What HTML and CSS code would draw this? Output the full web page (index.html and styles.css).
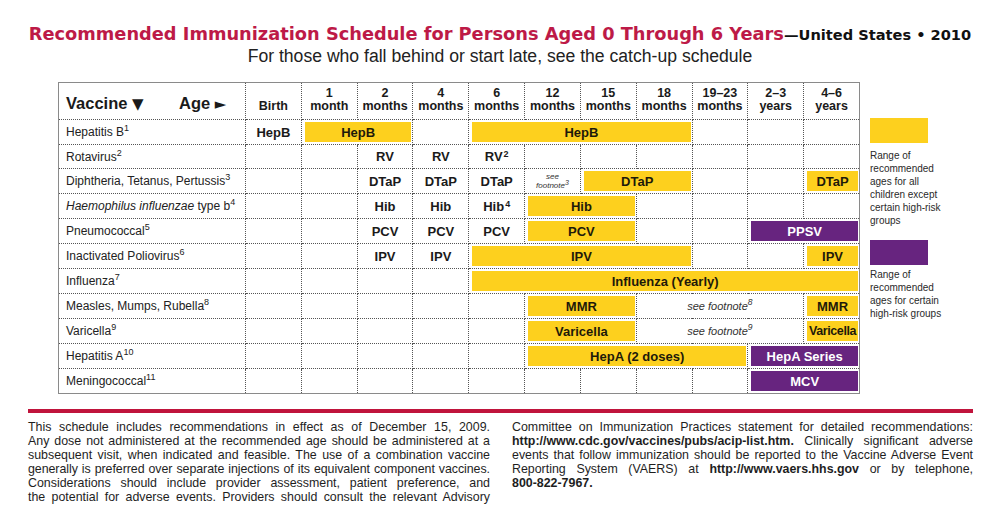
FILE: index.html
```html
<!DOCTYPE html>
<html lang="en">
<head>
<meta charset="utf-8">
<title>Recommended Immunization Schedule 0–6 Years</title>
<link rel="stylesheet" href="styles.css">
</head>
<body>
<div class="page">
  <header class="head">
    <h1 class="title"><span class="title-red">Recommended Immunization Schedule for Persons Aged 0 Through 6 Years</span><span class="title-black">—United States • 2010</span></h1>
    <p class="subtitle">For those who fall behind or start late, see the catch-up schedule</p>
  </header>

  <div class="main">
    <table class="sched">
      <colgroup>
        <col class="c-vac">
        <col><col><col><col><col><col><col><col><col><col><col>
      </colgroup>
      <thead>
        <tr class="hrow">
          <th class="h-vac"><span class="hv">Vaccine <span class="tri">▼</span></span><span class="ha">Age <span class="tri">►</span></span></th>
          <th>Birth</th>
          <th>1<br>month</th>
          <th>2<br>months</th>
          <th>4<br>months</th>
          <th>6<br>months</th>
          <th>12<br>months</th>
          <th>15<br>months</th>
          <th>18<br>months</th>
          <th>19–23<br>months</th>
          <th>2–3<br>years</th>
          <th>4–6<br>years</th>
        </tr>
      </thead>
      <tbody>
        <tr>
          <td class="vac">Hepatitis B<sup>1</sup></td>
          <td class="t">HepB</td>
          <td colspan="2"><div class="bar y">HepB</div></td>
          <td></td>
          <td colspan="4"><div class="bar y">HepB</div></td>
          <td></td><td></td><td></td>
        </tr>
        <tr>
          <td class="vac">Rotavirus<sup>2</sup></td>
          <td></td><td></td>
          <td class="t">RV</td>
          <td class="t">RV</td>
          <td class="t">RV<sup class="cs">2</sup></td>
          <td></td><td></td><td></td><td></td><td></td><td></td>
        </tr>
        <tr>
          <td class="vac">Diphtheria, Tetanus, Pertussis<sup>3</sup></td>
          <td></td><td></td>
          <td class="t">DTaP</td>
          <td class="t">DTaP</td>
          <td class="t">DTaP</td>
          <td class="fn-small"><span>see</span><span>footnote<sup>3</sup></span></td>
          <td colspan="2"><div class="bar y">DTaP</div></td>
          <td></td><td></td>
          <td><div class="bar y">DTaP</div></td>
        </tr>
        <tr>
          <td class="vac"><em>Haemophilus influenzae</em> type b<sup>4</sup></td>
          <td></td><td></td>
          <td class="t">Hib</td>
          <td class="t">Hib</td>
          <td class="t">Hib<sup class="cs">4</sup></td>
          <td colspan="2"><div class="bar y">Hib</div></td>
          <td></td><td></td><td></td><td></td>
        </tr>
        <tr>
          <td class="vac">Pneumococcal<sup>5</sup></td>
          <td></td><td></td>
          <td class="t">PCV</td>
          <td class="t">PCV</td>
          <td class="t">PCV</td>
          <td colspan="2"><div class="bar y">PCV</div></td>
          <td></td><td></td>
          <td colspan="2"><div class="bar p">PPSV</div></td>
        </tr>
        <tr>
          <td class="vac">Inactivated Poliovirus<sup>6</sup></td>
          <td></td><td></td>
          <td class="t">IPV</td>
          <td class="t">IPV</td>
          <td colspan="4"><div class="bar y">IPV</div></td>
          <td></td><td></td>
          <td><div class="bar y">IPV</div></td>
        </tr>
        <tr>
          <td class="vac">Influenza<sup>7</sup></td>
          <td></td><td></td><td></td><td></td>
          <td colspan="7"><div class="bar y">Influenza (Yearly)</div></td>
        </tr>
        <tr>
          <td class="vac">Measles, Mumps, Rubella<sup>8</sup></td>
          <td></td><td></td><td></td><td></td><td></td>
          <td colspan="2"><div class="bar y">MMR</div></td>
          <td colspan="3" class="fn">see footnote<sup>8</sup></td>
          <td><div class="bar y">MMR</div></td>
        </tr>
        <tr>
          <td class="vac">Varicella<sup>9</sup></td>
          <td></td><td></td><td></td><td></td><td></td>
          <td colspan="2"><div class="bar y">Varicella</div></td>
          <td colspan="3" class="fn">see footnote<sup>9</sup></td>
          <td><div class="bar y narrow">Varicella</div></td>
        </tr>
        <tr>
          <td class="vac">Hepatitis A<sup>10</sup></td>
          <td></td><td></td><td></td><td></td><td></td>
          <td colspan="4"><div class="bar y">HepA (2 doses)</div></td>
          <td colspan="2"><div class="bar p">HepA Series</div></td>
        </tr>
        <tr>
          <td class="vac">Meningococcal<sup>11</sup></td>
          <td></td><td></td><td></td><td></td><td></td><td></td><td></td><td></td><td></td>
          <td colspan="2"><div class="bar p">MCV</div></td>
        </tr>
      </tbody>
    </table>

    <aside class="legend">
      <div class="swatch y"></div>
      <p class="legend-text">Range of recommended ages for all children except certain high-risk groups</p>
      <div class="swatch p"></div>
      <p class="legend-text tight">Range of recommended ages for certain high-risk groups</p>
    </aside>
  </div>

  <footer class="notes">
    <div class="col">
      <span class="ln">This schedule includes recommendations in effect as of December 15, 2009.</span>
      <span class="ln">Any dose not administered at the recommended age should be administered at a</span>
      <span class="ln">subsequent visit, when indicated and feasible. The use of a combination vaccine</span>
      <span class="ln tightln">generally is preferred over separate injections of its equivalent component vaccines.</span>
      <span class="ln">Considerations should include provider assessment, patient preference, and</span>
      <span class="ln">the potential for adverse events. Providers should consult the relevant Advisory</span>
    </div>
    <div class="col">
      <span class="ln">Committee on Immunization Practices statement for detailed recommendations:</span>
      <span class="ln"><b>http://www.cdc.gov/vaccines/pubs/acip-list.htm.</b> Clinically significant adverse</span>
      <span class="ln">events that follow immunization should be reported to the Vaccine Adverse Event</span>
      <span class="ln">Reporting System (VAERS) at <b>http://www.vaers.hhs.gov</b> or by telephone,</span>
      <span class="ln last"><b>800-822-7967.</b></span>
    </div>
  </footer>
</div>
</body>
</html>
```

FILE: styles.css
```css
* {
  box-sizing: border-box;
  margin: 0;
  padding: 0;
}

html, body {
  background: #ffffff;
}

body {
  font-family: "Liberation Sans", Arial, sans-serif;
  color: #1c1c1c;
}

.page {
  width: 1000px;
  height: 515px;
  padding-top: 23px;
  overflow: hidden;
}

/* ---------- heading ---------- */
.title {
  font-family: "DejaVu Sans", "Liberation Sans", sans-serif;
  font-weight: bold;
  font-size: 17.8px;
  line-height: 22px;
  text-align: center;
  white-space: nowrap;
}

.title-red {
  color: #bd1a47;
}

.title-black {
  color: #111111;
  font-size: 14.6px;
}

.subtitle {
  font-size: 17.6px;
  line-height: 20px;
  text-align: center;
  color: #222222;
}

/* ---------- main area ---------- */
.main {
  display: flex;
  align-items: flex-start;
  gap: 10px;
  padding-left: 58px;
  margin-top: 16px;
}

.sched {
  width: 802px;
  table-layout: fixed;
  border-collapse: collapse;
  border: 1px solid #8a8a8a;
  color: #1a1a1a;
}

.c-vac {
  width: 187px;
}

.sched th,
.sched td {
  border: 1px dotted #555555;
  padding: 0;
  text-align: center;
  vertical-align: middle;
}

.hrow {
  height: 37px;
}

.sched th {
  vertical-align: bottom;
  font-size: 12.5px;
  line-height: 13px;
  font-weight: bold;
  padding-bottom: 6px;
  color: #1a1a1a;
}

.sched th.h-vac {
  vertical-align: middle;
  padding: 4px 17px 0 7px;
  font-size: 16.5px;
  line-height: 20px;
  text-align: left;
}

.h-vac {
  white-space: nowrap;
}

.hv {
  display: inline-block;
  width: 113px;
}

.tri {
  font-family: "DejaVu Sans", sans-serif;
  font-size: 15px;
}

.sched tbody tr {
  height: 24.4px;
}

.vac {
  text-align: left !important;
  padding-left: 7px !important;
  font-size: 12px;
  white-space: nowrap;
  color: #222222;
}

.vac sup {
  font-size: 9px;
  vertical-align: 5px;
  line-height: 0;
}

.t {
  font-size: 13px;
  font-weight: bold;
}

.cs {
  font-size: 9px;
  vertical-align: 4px;
  line-height: 0;
  margin-left: 1px;
}

.bar {
  margin: 2px 1px 2px 3px;
  height: 20px;
  display: flex;
  align-items: center;
  justify-content: center;
  font-size: 13px;
  font-weight: bold;
  white-space: nowrap;
}

.bar.y {
  background: #fdd01e;
  color: #1e1a0a;
}

.bar.p {
  background: #67247f;
  color: #ffffff;
}

.bar.narrow {
  letter-spacing: -0.4px;
  font-size: 12.5px;
}

.fn-small {
  font-style: italic;
  font-size: 8px;
  line-height: 9px;
  color: #333333;
}

.fn-small span {
  display: block;
}

.fn-small sup {
  font-size: 7px;
  vertical-align: 3px;
  line-height: 0;
}

.fn {
  font-style: italic;
  font-size: 11px;
  color: #333333;
}

.fn sup {
  font-size: 8.5px;
  vertical-align: 5px;
  line-height: 0;
}

/* ---------- legend ---------- */
.legend {
  width: 82px;
  padding-top: 36px;
}

.swatch {
  width: 58px;
  height: 25px;
}

.swatch.y {
  background: #fdd01e;
}

.swatch.p {
  background: #67247f;
  margin-top: 13px;
}

.legend-text {
  margin-top: 6px;
  font-size: 10px;
  line-height: 13px;
  color: #2a2a2a;
}

.legend-text.tight {
  margin-top: 3px;
}

/* ---------- footnotes ---------- */
.notes {
  margin: 15px 27px 0 28px;
  border-top: 4px solid #c0143c;
  padding-top: 7px;
  display: grid;
  grid-template-columns: 462px 461px;
  column-gap: 22px;
  font-size: 12.4px;
  line-height: 14px;
  color: #1e1e1e;
}

.ln {
  display: block;
  white-space: nowrap;
  text-align: justify;
  text-align-last: justify;
}

.ln.tightln {
  letter-spacing: -0.05px;
}

.ln.last {
  text-align-last: left;
}
```
